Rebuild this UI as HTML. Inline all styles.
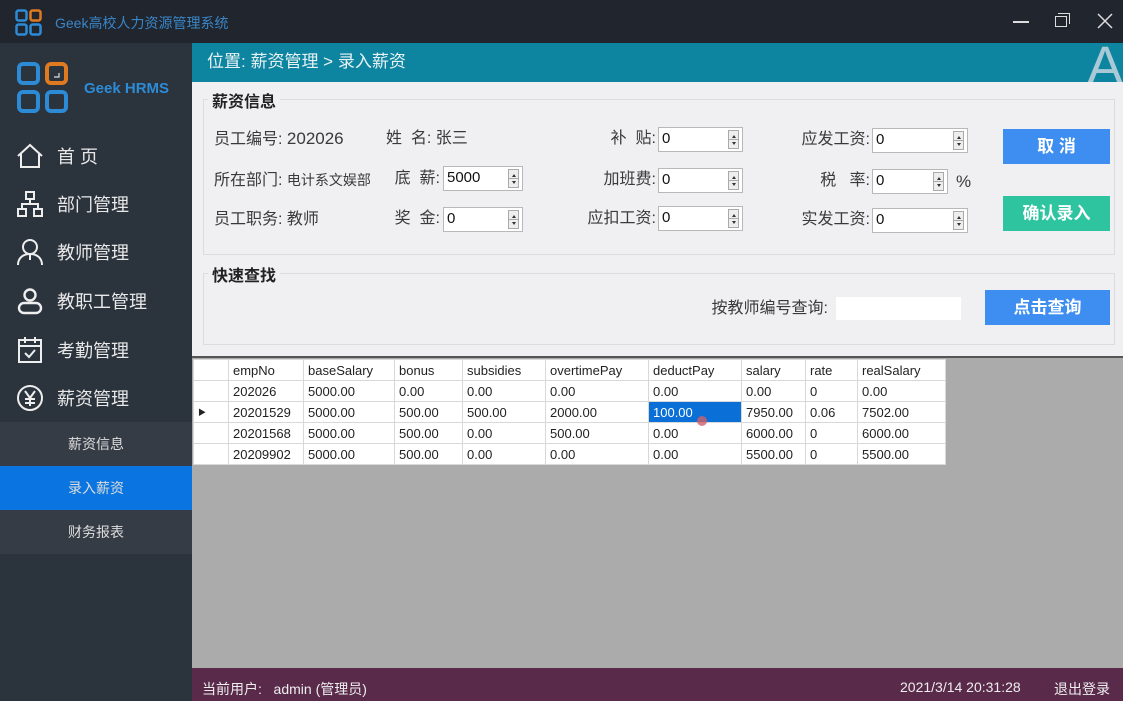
<!DOCTYPE html>
<html><head><meta charset="utf-8"><style>
*{margin:0;padding:0;box-sizing:border-box}
body{width:1123px;height:701px;overflow:hidden;position:relative;font-family:"Liberation Sans","Noto Sans CJK SC",sans-serif;background:#2b333d}
.a{position:absolute;white-space:nowrap}
.lbl{position:absolute;font-size:16px;color:#3a3a3a;white-space:nowrap;line-height:20px}
.r{position:absolute;font-size:16px;color:#3a3a3a;white-space:nowrap;line-height:20px;text-align:right}
.sp{position:absolute;height:25px;background:#fff;border:1px solid #b8b8b8;font-size:15px;color:#111;padding-left:3px;line-height:22px}
.sp i{position:absolute;right:3px;top:2px;width:11px;height:19px;border:1px solid #aaa;background:#eee}
.sp i:before{content:"";position:absolute;left:3px;top:2px;border:2px solid transparent;border-bottom:3px solid #333}
.sp i:after{content:"";position:absolute;left:3px;bottom:1px;border:2px solid transparent;border-top:3px solid #333}
.sp i b{position:absolute;left:0;right:0;top:8px;border-top:1px solid #aaa}
.nav{position:absolute;left:0;width:192px;height:48px;color:#e8e8e8;font-size:18px}
.nav span{position:absolute;left:57px;top:10px}
.nav svg{position:absolute;left:16px;top:9px}
.sub{position:absolute;left:0;width:192px;height:44px;font-size:14px;color:#ddd;text-align:center;line-height:44px}
table{border-collapse:collapse;position:absolute;left:193px;top:359px;font-size:13px;color:#222;background:#fff}
td{border:1px solid #d8d8d8;height:21px;padding:0 0 0 4px;line-height:19px}
.btn{position:absolute;color:#fff;font-weight:bold;font-size:17px;text-align:center}
</style></head><body>
<div class="a" style="left:0;top:0;width:1123px;height:43px;background:#20252e"></div>
<svg class="a" style="left:15px;top:9px" width="27" height="27" viewBox="0 0 27 27" fill="none" stroke-width="2.5"><rect x="1.5" y="1.5" width="10" height="10" rx="2" stroke="#2d8bd6"/><rect x="15.5" y="1.5" width="10" height="10" rx="2" stroke="#e07a20"/><rect x="1.5" y="15.5" width="10" height="10" rx="2" stroke="#2d8bd6"/><rect x="15.5" y="15.5" width="10" height="10" rx="2" stroke="#2d8bd6"/></svg>
<div class="a" style="left:55px;top:13px;font-size:14px;color:#3a86c8">Geek高校人力资源管理系统</div>
<div class="a" style="left:1013px;top:21px;width:16px;height:2px;background:#ddd"></div>
<div class="a" style="left:1055px;top:16px;width:12px;height:11px;border:1.5px solid #ddd"></div>
<div class="a" style="left:1058px;top:13px;width:12px;height:11px;border-top:1.5px solid #ddd;border-right:1.5px solid #ddd"></div>
<svg class="a" style="left:1097px;top:13px" width="16" height="16" viewBox="0 0 16 16" stroke="#ddd" stroke-width="1.5"><path d="M1 1l14 14M15 1L1 15"/></svg>
<svg class="a" style="left:17px;top:62px" width="51" height="51" viewBox="0 0 51 51" fill="none" stroke-width="4"><rect x="2" y="2" width="19" height="19" rx="4" stroke="#2d8bd6"/><rect x="30" y="2" width="19" height="19" rx="4" stroke="#e07a20"/><rect x="2" y="30" width="19" height="19" rx="4" stroke="#2d8bd6"/><rect x="30" y="30" width="19" height="19" rx="4" stroke="#2d8bd6"/><path d="M37 15h5v-4" stroke="#ddd" stroke-width="1.2"/></svg>
<div class="a" style="left:84px;top:80px;font-size:15px;font-weight:bold;color:#2d8bd6">Geek HRMS</div>
<div class="nav" style="top:133px"><svg width="28" height="28" viewBox="0 0 28 28" fill="none" stroke="#eee" stroke-width="2"><path d="M2 14L14 3l12 11M5 12v13h18V12"/></svg><span>首 页</span></div>
<div class="nav" style="top:181px"><svg width="28" height="28" viewBox="0 0 28 28" fill="none" stroke="#eee" stroke-width="2"><rect x="10" y="2" width="8" height="7"/><rect x="2" y="19" width="8" height="7"/><rect x="18" y="19" width="8" height="7"/><path d="M14 9v5M6 19v-5h16v5"/></svg><span>部门管理</span></div>
<div class="nav" style="top:229px"><svg width="28" height="28" viewBox="0 0 28 28" fill="none" stroke="#eee" stroke-width="2"><circle cx="14" cy="9" r="7"/><path d="M2 27c0-7 5-11 12-11s12 4 12 11M14 17v5"/></svg><span>教师管理</span></div>
<div class="nav" style="top:278px"><svg width="28" height="28" viewBox="0 0 28 28" fill="none" stroke="#eee" stroke-width="2.4"><circle cx="14" cy="8" r="5.5"/><rect x="3" y="16" width="22" height="10" rx="5"/></svg><span>教职工管理</span></div>
<div class="nav" style="top:327px"><svg width="28" height="28" viewBox="0 0 28 28" fill="none" stroke="#eee" stroke-width="2"><rect x="3" y="4" width="22" height="22"/><path d="M3 10h22M9 1v6M19 1v6M9 17l4 4 6-7"/></svg><span>考勤管理</span></div>
<div class="nav" style="top:375px"><svg width="28" height="28" viewBox="0 0 28 28" fill="none" stroke="#eee" stroke-width="2"><circle cx="14" cy="14" r="12"/><path d="M9 7l5 7 5-7M14 14v8M9 15h10M9 19h10"/></svg><span>薪资管理</span></div>
<div class="sub" style="top:422px;background:#363c45">薪资信息</div>
<div class="sub" style="top:466px;background:#0a75e0">录入薪资</div>
<div class="sub" style="top:510px;background:#363c45">财务报表</div>
<div class="a" style="left:192px;top:43px;width:931px;height:39px;background:#0e85a0;overflow:hidden"><div class="a" style="left:895px;top:-8px;font-size:54px;color:#a9c9d6">A</div></div>
<div class="a" style="left:207px;top:52px;font-size:17px;color:#e8f2f5;line-height:20px">位置:&nbsp;薪资管理 &gt; 录入薪资</div>
<div class="a" style="left:192px;top:82px;width:931px;height:275px;background:#f0eff2"></div>
<div class="a" style="left:203px;top:99px;width:912px;height:156px;border:1px solid #dcdcdc"></div>
<div class="a" style="left:208px;top:88px;font-size:16px;font-weight:bold;color:#222;background:#f0eff2;padding:0 4px">薪资信息</div>
<div class="a" style="left:203px;top:273px;width:912px;height:72px;border:1px solid #dcdcdc"></div>
<div class="a" style="left:208px;top:262px;font-size:16px;font-weight:bold;color:#222;background:#f0eff2;padding:0 4px">快速查找</div>

<div class="lbl" style="left:214px;top:129px">员工编号: <span style="font-size:17px">202026</span></div>
<div class="lbl" style="left:386px;top:129px">姓&nbsp;&nbsp;名: 张三</div>
<div class="lbl" style="left:214px;top:170px">所在部门: <span style="font-size:14px">电计系文娱部</span></div>
<div class="r" style="right:683px;top:169px">底&nbsp;&nbsp;薪:</div>
<div class="lbl" style="left:214px;top:210px">员工职务: 教师</div>
<div class="r" style="right:683px;top:209px">奖&nbsp;&nbsp;金:</div>
<div class="sp" style="left:443px;top:166px;width:80px">5000<i><b></b></i></div>
<div class="sp" style="left:443px;top:207px;width:80px">0<i><b></b></i></div>

<div class="r" style="right:467px;top:129px">补&nbsp;&nbsp;贴:</div>
<div class="r" style="right:467px;top:170px">加班费:</div>
<div class="r" style="right:467px;top:209px">应扣工资:</div>
<div class="sp" style="left:658px;top:127px;width:85px">0<i><b></b></i></div>
<div class="sp" style="left:658px;top:168px;width:85px">0<i><b></b></i></div>
<div class="sp" style="left:658px;top:206px;width:85px">0<i><b></b></i></div>

<div class="r" style="right:253px;top:130px">应发工资:</div>
<div class="r" style="right:253px;top:171px">税&nbsp;&nbsp;&nbsp;率:</div>
<div class="r" style="right:253px;top:210px">实发工资:</div>
<div class="sp" style="left:872px;top:128px;width:96px">0<i><b></b></i></div>
<div class="sp" style="left:872px;top:169px;width:76px">0<i><b></b></i></div>
<div class="lbl" style="left:956px;top:172px;font-size:17px">%</div>
<div class="sp" style="left:872px;top:208px;width:96px">0<i><b></b></i></div>

<div class="btn" style="left:1003px;top:129px;width:107px;height:35px;line-height:35px;background:#3d8ef0">取 消</div>
<div class="btn" style="left:1003px;top:196px;width:107px;height:35px;line-height:35px;background:#2ec4a0">确认录入</div>
<div class="r" style="right:295px;top:299px">按教师编号查询:</div>
<div class="a" style="left:836px;top:297px;width:125px;height:23px;background:#fff"></div>
<div class="btn" style="left:985px;top:290px;width:125px;height:35px;line-height:35px;background:#3d8ef0">点击查询</div>

<div class="a" style="left:192px;top:356px;width:931px;height:312px;background:#ababab;border-top:2px solid #555"></div>
<table>
<tr><td style="width:35px"></td><td style="width:75px">empNo</td><td style="width:91px">baseSalary</td><td style="width:68px">bonus</td><td style="width:83px">subsidies</td><td style="width:103px">overtimePay</td><td style="width:93px">deductPay</td><td style="width:64px">salary</td><td style="width:52px">rate</td><td style="width:88px">realSalary</td></tr>
<tr><td></td><td>202026</td><td>5000.00</td><td>0.00</td><td>0.00</td><td>0.00</td><td>0.00</td><td>0.00</td><td>0</td><td>0.00</td></tr>
<tr><td style="font-size:8px">▶</td><td>20201529</td><td>5000.00</td><td>500.00</td><td>500.00</td><td>2000.00</td><td style="background:#0a6fd6;color:#fff">100.00</td><td>7950.00</td><td>0.06</td><td>7502.00</td></tr>
<tr><td></td><td>20201568</td><td>5000.00</td><td>500.00</td><td>0.00</td><td>500.00</td><td>0.00</td><td>6000.00</td><td>0</td><td>6000.00</td></tr>
<tr><td></td><td>20209902</td><td>5000.00</td><td>500.00</td><td>0.00</td><td>0.00</td><td>0.00</td><td>5500.00</td><td>0</td><td>5500.00</td></tr>
</table>
<div class="a" style="left:697px;top:416px;width:10px;height:10px;border-radius:50%;background:#d0606a;opacity:.8"></div>
<div class="a" style="left:192px;top:668px;width:931px;height:33px;background:#5a2a4a"></div>
<div class="a" style="left:202px;top:679px;font-size:14px;color:#eee">当前用户:&nbsp;&nbsp; admin (管理员)</div>
<div class="a" style="left:900px;top:679px;font-size:14px;color:#eee">2021/3/14 20:31:28</div>
<div class="a" style="left:1054px;top:679px;font-size:14px;color:#eee">退出登录</div>
</body></html>
